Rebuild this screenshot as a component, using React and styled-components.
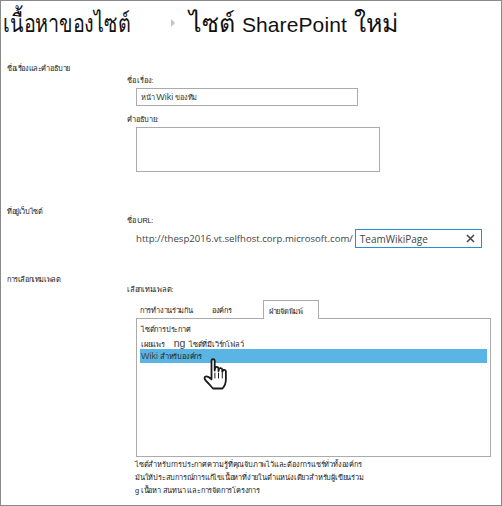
import React from "react";
import styled, { createGlobalStyle } from "styled-components";

const Global = createGlobalStyle`
  html, body { margin: 0; padding: 0; background: #fff; }
  body { font-family: "Liberation Sans", "DejaVu Sans", sans-serif; color: #222; }
`;

const Page = styled.div`
  box-sizing: border-box;
  width: 502px;
  height: 506px;
  border: 1px solid #8a8a8a;
  overflow: hidden;
  position: relative;
`;
const TitleBar = styled.h1`
  margin: 0;
  height: 51px;
  display: flex;
  align-items: flex-start;
  font-weight: 400;
  font-size: 25px;
  line-height: 30px;
  color: #111;
  padding: 7px 0 0 2px;
  box-sizing: border-box;
`;
const Crumb = styled.span`
  display: inline-block;
  white-space: nowrap;
  width: ${(p) => p.$w}px;
  transform: scaleX(${(p) => p.$sx || 1});
  transform-origin: left center;
`;
const CrumbLatin = styled.span`
  font-size: 21px;
  letter-spacing: 0.1px;
`;
const CrumbArrow = styled.span`
  width: 0;
  height: 0;
  margin: 11px 14px 0 0;
  border-left: 4px solid #c4c4c4;
  border-top: 4px solid transparent;
  border-bottom: 4px solid transparent;
`;
const Section = styled.section`
  display: grid;
  grid-template-columns: 126px 1fr;
  height: ${(p) => p.$h}px;
  font-size: 7.4px;
  line-height: 12px;
`;
const SectionName = styled.div`
  padding: 11px 0 0 6px;
  white-space: nowrap;
  letter-spacing: -0.4px;
`;
const Fields = styled.div`
  padding-top: ${(p) => p.$top}px;
  display: flex;
  flex-direction: column;
  align-items: flex-start;
`;
const FieldLabel = styled.label`
  display: block;
  white-space: nowrap;
  letter-spacing: -0.25px;
`;
const TextBox = styled.div`
  box-sizing: border-box;
  width: 222px;
  height: 18px;
  margin: 1px 0 8px 9px;
  border: 1px solid #ababab;
  padding: 0 4px;
  line-height: 16px;
  color: #333;
  letter-spacing: -0.2px;
`;
const WikiWord = styled.span`
  font-size: 9px;
  color: #444;
  letter-spacing: 0;
`;
const TextArea = styled.div`
  box-sizing: border-box;
  width: 244px;
  height: 45px;
  margin: 1px 0 0 9px;
  border: 1px solid #ababab;
`;
const UrlRow = styled.div`
  display: flex;
  align-items: center;
  margin: 2px 0 0 9px;
  font-family: "Open Sans", sans-serif;
  font-size: 9.6px;
  color: #444;
  white-space: nowrap;
`;
const UrlInput = styled.div`
  box-sizing: border-box;
  width: 127px;
  height: 19px;
  margin-left: 2px;
  border: 1px solid #2a8dd4;
  padding: 0 6px 0 4px;
  display: flex;
  align-items: center;
  justify-content: space-between;
  font-size: 10px;
`;
const ClearIcon = styled.svg`
  display: block;
`;
const Tabs = styled.div`
  display: flex;
  align-items: flex-end;
  height: 18px;
  margin: 4px 0 0 9px;
  position: relative;
  z-index: 1;
`;
const Tab = styled.div`
  box-sizing: border-box;
  height: ${(p) => (p.$active ? 19 : 14)}px;
  width: ${(p) => p.$w}px;
  padding-left: ${(p) => p.$pad}px;
  white-space: nowrap;
  line-height: 14px;
  letter-spacing: -0.3px;
  ${(p) =>
    p.$active
      ? `border: 1px solid #ababab; border-bottom: 0; background: #fff; margin-bottom: -1px; padding-top: 4px;`
      : ""}
`;
const ListBox = styled.div`
  box-sizing: border-box;
  width: 355px;
  height: 139px;
  margin-left: 9px;
  border: 1px solid #ababab;
  padding: 4px 3px;
`;
const ListItem = styled.div`
  height: ${(p) => (p.$selected ? 14 : 13)}px;
  line-height: 14px;
  padding-left: 1px;
  white-space: nowrap;
  letter-spacing: -0.2px;
  background: ${(p) => (p.$selected ? "#5ab5e4" : "transparent")};
`;
const Latin = styled.span`
  font-size: 10.5px;
  color: #444;
  margin: 0 4px 0 9px;
`;
const Description = styled.p`
  margin: 1px 0 0 8px;
  line-height: 13px;
  white-space: nowrap;
  letter-spacing: -0.2px;
`;
const Cursor = styled.svg`
  position: absolute;
  left: 199px;
  top: 355px;
`;

const HandCursor = () => (
  <Cursor width="30" height="34" viewBox="0 0 25 34" fill="#fff" stroke="#1a1a1a" strokeWidth="1.8" strokeLinejoin="round" strokeLinecap="round">
    <path d="M9 21V4.5C9 2.8 12.2 2.8 12.2 4.5V14.5L12.6 12C13 10.4 15.8 10.6 16 12.3V15L16.5 13C17 11.6 19.6 11.8 19.8 13.5V15.8L20.4 14.6C21 13.4 23.4 13.8 23.4 15.6V23C23.4 28 21.4 31 20 32.5H10.5C8.5 30.4 6.6 27.8 3.6 25C1.4 23 1.6 20.6 3.6 20.4C5.2 20.2 7.4 21.8 9 23.4Z" />
    <path d="M12.4 17V22M16 17V22M19.8 17V22" fill="none" strokeWidth="1" />
  </Cursor>
);

export default function App() {
  return (
    <Page>
      <Global />
      <TitleBar>
        <Crumb $w={168} $sx={0.79}>เนื้อหาของไซต์</Crumb>
        <CrumbArrow />
        <Crumb>ไซต์ <CrumbLatin>SharePoint</CrumbLatin> ใหม่</Crumb>
      </TitleBar>
      <Section $h={143}>
        <SectionName>ชื่อเรื่องและคำอธิบาย</SectionName>
        <Fields $top={23}>
          <FieldLabel>ชื่อ เรื่อง:</FieldLabel>
          <TextBox>หน้า <WikiWord>Wiki</WikiWord> ของทีม</TextBox>
          <FieldLabel>คำอธิบาย:</FieldLabel>
          <TextArea />
        </Fields>
      </Section>
      <Section $h={68}>
        <SectionName>ที่อยู่เว็บไซต์</SectionName>
        <Fields $top={20}>
          <FieldLabel>ชื่อ URL:</FieldLabel>
          <UrlRow>
            http://thesp2016.vt.selfhost.corp.microsoft.com/
            <UrlInput>
              TeamWikiPage
              <ClearIcon width="9" height="9" viewBox="0 0 9 9" stroke="#444" strokeWidth="1.5">
                <path d="M1 1L8 8M8 1L1 8" />
              </ClearIcon>
            </UrlInput>
          </UrlRow>
        </Fields>
      </Section>
      <Section $h={242}>
        <SectionName>การเลือกเทมเพลต</SectionName>
        <Fields $top={21}>
          <FieldLabel>เลือกเทมเพลต:</FieldLabel>
          <Tabs>
            <Tab $w={71} $pad={4}>การทำงานร่วมกัน</Tab>
            <Tab $w={56} $pad={5}>องค์กร</Tab>
            <Tab $active $w={56} $pad={5}>ฝ่ายจัดพิมพ์</Tab>
          </Tabs>
          <ListBox>
            <ListItem>ไซต์การประกาศ</ListItem>
            <ListItem>เผยแพร<Latin>ng</Latin>ไซต์ที่มีเวิร์กโฟลว์</ListItem>
            <ListItem $selected><WikiWord>Wiki</WikiWord> สำหรับองค์กร</ListItem>
          </ListBox>
          <Description>
            ไซต์สำหรับการประกาศความรู้ที่คุณจับภาพไว้และต้องการแชร์ทั่วทั้งองค์กร
            <br />
            มันให้ประสบการณ์การแก้ไขเนื้อหาที่ง่ายในตำแหน่งเดียวสำหรับผู้เขียนร่วม
            <br />
            g เนื้อหา สนทนา และการจัดการโครงการ
          </Description>
        </Fields>
      </Section>
      <HandCursor />
    </Page>
  );
}
